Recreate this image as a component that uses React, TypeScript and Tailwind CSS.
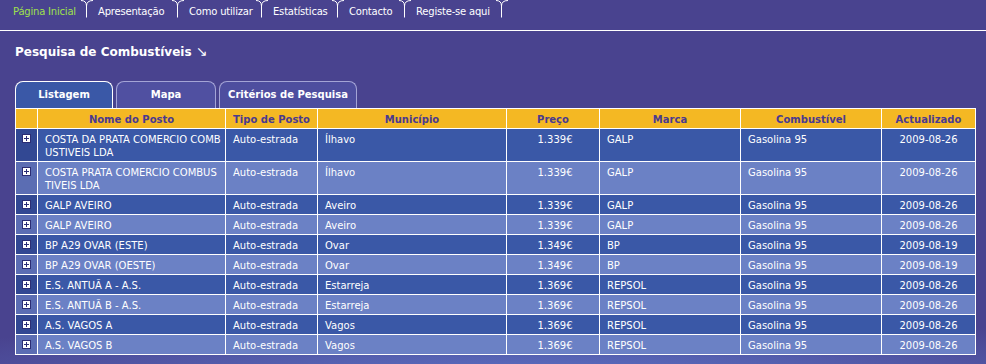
import React from "react";

const navItems = [
  { label: "Página Inicial", w: "w-[87px]", active: true },
  { label: "Apresentação", w: "w-[91px]" },
  { label: "Como utilizar", w: "w-[84px]" },
  { label: "Estatísticas", w: "w-[76px]" },
  { label: "Contacto", w: "w-[67px]" },
  { label: "Registe-se aqui", w: "w-[97px]" },
];

const rows = [
  { nome: ["COSTA DA PRATA COMERCIO COMB", "USTIVEIS LDA"], mun: "Ílhavo", preco: "1.339€", marca: "GALP", data: "2009-08-26" },
  { nome: ["COSTA PRATA COMERCIO COMBUS", "TIVEIS LDA"], mun: "Ílhavo", preco: "1.339€", marca: "GALP", data: "2009-08-26" },
  { nome: ["GALP AVEIRO"], mun: "Aveiro", preco: "1.339€", marca: "GALP", data: "2009-08-26" },
  { nome: ["GALP AVEIRO"], mun: "Aveiro", preco: "1.339€", marca: "GALP", data: "2009-08-26" },
  { nome: ["BP A29 OVAR (ESTE)"], mun: "Ovar", preco: "1.349€", marca: "BP", data: "2009-08-19" },
  { nome: ["BP A29 OVAR (OESTE)"], mun: "Ovar", preco: "1.349€", marca: "BP", data: "2009-08-19" },
  { nome: ["E.S. ANTUÃ A - A.S."], mun: "Estarreja", preco: "1.369€", marca: "REPSOL", data: "2009-08-26" },
  { nome: ["E.S. ANTUÃ B - A.S."], mun: "Estarreja", preco: "1.369€", marca: "REPSOL", data: "2009-08-26" },
  { nome: ["A.S. VAGOS A"], mun: "Vagos", preco: "1.369€", marca: "REPSOL", data: "2009-08-26" },
  { nome: ["A.S. VAGOS B"], mun: "Vagos", preco: "1.369€", marca: "REPSOL", data: "2009-08-26" },
];

const headers = ["", "Nome do Posto", "Tipo de Posto", "Município", "Preço", "Marca", "Combustível", "Actualizado"];

// white fork between the top menu tabs
const TabFork = () => (
  <svg width="12" height="18" viewBox="0 0 12 18" className="block shrink-0">
    <path d="M0 0.5 Q5.5 0.5 5.5 6 V17.5 M5.5 6 Q5.5 0.5 12 0.5" stroke="#fff" strokeWidth="1" fill="none" />
  </svg>
);

const PlusBox = () => (
  <svg width="9" height="9" viewBox="0 0 9 9" className="block mx-auto mt-[1px]">
    <rect x="0.5" y="0.5" width="8" height="8" fill="#fff" stroke="#2b2d74" />
    <path d="M2 4.5 H7 M4.5 2 V7" stroke="#2b2d74" strokeWidth="1" />
  </svg>
);

const App: React.FC = () => {
  return (
    <div className="w-[986px] h-[364px] overflow-hidden text-white font-['DejaVu_Sans',sans-serif] bg-[#49438f] bg-[radial-gradient(ellipse_70%_18%_at_55%_104%,#5b70c4_0%,#5560b0_40%,rgba(73,67,143,0)_100%)]">
      {/* top menu */}
      <div className="flex h-[30px]">
        {navItems.map((item, i) => (
          <div key={item.label} className={`flex items-start ${item.w}`}>
            {i > 0 && <div className="-ml-[6px]"><TabFork /></div>}
            <span
              className={`pt-[5px] text-[10px] tracking-[-0.2px] leading-[13px] whitespace-nowrap ${
                i === 0 ? "pl-[13px] text-[#9fe04c]" : "pl-[5px] text-white"
              }`}
            >
              {item.label}
            </span>
          </div>
        ))}
        <div className="-ml-[6px]">
          <TabFork />
        </div>
      </div>
      <div className="h-px bg-white" />

      <div className="pl-[15px]">
        <h1 className="mt-[13px] text-[12px] leading-[16px] font-bold">
          Pesquisa de Combustíveis <span className="font-normal text-[14px] leading-[14px]">↘</span>
        </h1>

        {/* sub tabs */}
        <div className="mt-[21px] flex gap-[3px] h-[27px] text-[10px] font-bold">
          <div className="w-[98px] flex items-center justify-center pb-[2px] rounded-t-[8px] border border-b-0 border-white bg-[#3a58a7]">
            Listagem
          </div>
          <div className="w-[100px] flex items-center justify-center pb-[2px] rounded-t-[8px] border border-b-0 border-[#a4a4d6] bg-[#5050a1]">
            Mapa
          </div>
          <div className="w-[138px] flex items-center justify-center pb-[2px] rounded-t-[8px] border border-b-0 border-[#a4a4d6] bg-[#4e4e9f]">
            Critérios de Pesquisa
          </div>
        </div>

        {/* listing */}
        <table className="w-[960px] table-fixed border-collapse border border-white text-[10px] leading-[13px]">
          <colgroup>
            <col className="w-[22px]" />
            <col className="w-[188px]" />
            <col className="w-[92px]" />
            <col className="w-[189px]" />
            <col className="w-[93px]" />
            <col className="w-[141px]" />
            <col className="w-[141px]" />
            <col className="w-[94px]" />
          </colgroup>
          <thead>
            <tr className="bg-[#f4b823] text-[#4a3a8f]">
              {headers.map((h, i) => (
                <th key={i} className="border border-white pt-[4px] pb-[2px] px-[4px] font-bold text-center whitespace-nowrap">
                  {h}
                </th>
              ))}
            </tr>
          </thead>
          <tbody>
            {rows.map((r, i) => {
              const dark = i % 2 === 0;
              return (
                <tr key={i} className={dark ? "bg-[#3a58a7]" : "bg-[#6b81c5]"}>
                  <td className={`border border-white pt-[4px] pb-[2px] align-top ${dark ? "bg-[#324893]" : "bg-[#5b6db3]"}`}>
                    <PlusBox />
                  </td>
                  <td className="border border-white pt-[4px] pb-[2px] pl-[7px] align-top whitespace-nowrap overflow-hidden">
                    {r.nome.map((line) => (
                      <div key={line}>{line}</div>
                    ))}
                  </td>
                  <td className="border border-white pt-[4px] pb-[2px] pl-[7px] align-top">Auto-estrada</td>
                  <td className="border border-white pt-[4px] pb-[2px] pl-[7px] align-top">{r.mun}</td>
                  <td className="border border-white pt-[4px] pb-[2px] pl-[4px] align-top text-center">{r.preco}</td>
                  <td className="border border-white pt-[4px] pb-[2px] pl-[7px] align-top">{r.marca}</td>
                  <td className="border border-white pt-[4px] pb-[2px] pl-[7px] align-top">Gasolina 95</td>
                  <td className="border border-white pt-[4px] pb-[2px] align-top text-center">{r.data}</td>
                </tr>
              );
            })}
          </tbody>
        </table>
      </div>
    </div>
  );
};

export default App;
